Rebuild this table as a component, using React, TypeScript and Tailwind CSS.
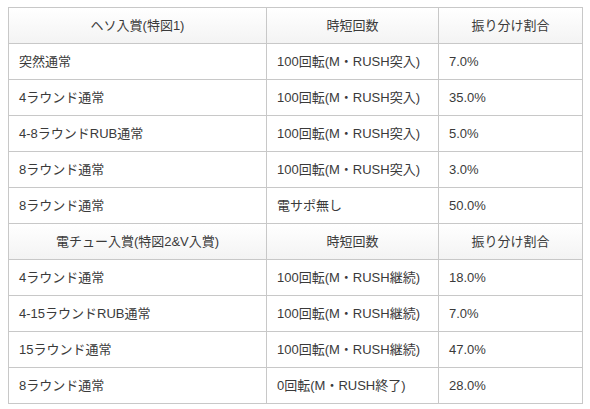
import React from 'react';

type Row = { name: string; jitan: string; rate: string };

const hesoRows: Row[] = [
  { name: '突然通常', jitan: '100回転(M・RUSH突入)', rate: '7.0%' },
  { name: '4ラウンド通常', jitan: '100回転(M・RUSH突入)', rate: '35.0%' },
  { name: '4-8ラウンドRUB通常', jitan: '100回転(M・RUSH突入)', rate: '5.0%' },
  { name: '8ラウンド通常', jitan: '100回転(M・RUSH突入)', rate: '3.0%' },
  { name: '8ラウンド通常', jitan: '電サポ無し', rate: '50.0%' },
];

const denchuRows: Row[] = [
  { name: '4ラウンド通常', jitan: '100回転(M・RUSH継続)', rate: '18.0%' },
  { name: '4-15ラウンドRUB通常', jitan: '100回転(M・RUSH継続)', rate: '7.0%' },
  { name: '15ラウンド通常', jitan: '100回転(M・RUSH継続)', rate: '47.0%' },
  { name: '8ラウンド通常', jitan: '0回転(M・RUSH終了)', rate: '28.0%' },
];

const HeadRow = ({ title }: { title: string }) => (
  <tr className="h-9 bg-gradient-to-b from-white to-[#f3f3f3]">
    <th className="border border-[#c8c8c8] font-normal text-center px-2.5">{title}</th>
    <th className="border border-[#c8c8c8] font-normal text-center px-2.5">時短回数</th>
    <th className="border border-[#c8c8c8] font-normal text-center px-2.5">振り分け割合</th>
  </tr>
);

const BodyRow = ({ row }: { row: Row }) => (
  <tr className="h-9 bg-white">
    <td className="border border-[#c8c8c8] px-2.5">{row.name}</td>
    <td className="border border-[#c8c8c8] px-2.5">{row.jitan}</td>
    <td className="border border-[#c8c8c8] px-2.5">{row.rate}</td>
  </tr>
);

export default function App() {
  return (
    <div className="w-[590px] h-[409px] bg-white pt-[7px] pl-2 font-['Liberation_Sans','Noto_Sans_CJK_JP',sans-serif] text-[13px] text-[#3a3a3a]">
      <table className="w-[574px] border-collapse table-fixed">
        <colgroup>
          <col className="w-[258px]" />
          <col className="w-[172px]" />
          <col className="w-[144px]" />
        </colgroup>
        <tbody>
          <HeadRow title="ヘソ入賞(特図1)" />
          {hesoRows.map((r, i) => (
            <BodyRow key={'h' + i} row={r} />
          ))}
          <HeadRow title="電チュー入賞(特図2&V入賞)" />
          {denchuRows.map((r, i) => (
            <BodyRow key={'d' + i} row={r} />
          ))}
        </tbody>
      </table>
    </div>
  );
}
